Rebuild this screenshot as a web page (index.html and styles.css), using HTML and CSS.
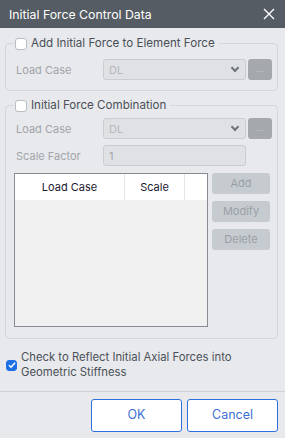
FILE: index.html
```html
<!doctype html>
<html lang="en">
  <head>
    <meta charset="UTF-8" />
    <title>Initial Force Control Data</title>
    <link rel="stylesheet" href="styles.css">
  </head>
  <body>
    <div class="dialog">
      <header class="title-bar">
        <span class="title">Initial Force Control Data</span>
        <svg class="close" width="12" height="12" viewBox="0 0 12 12">
          <path d="M1 1L11 11M11 1L1 11" stroke="#fff" stroke-width="1.4" />
        </svg>
      </header>
      <main class="content">
        <fieldset class="group">
          <legend><span class="check"></span>Add Initial Force to Element Force</legend>
          <div class="row">
            <span class="label">Load Case</span>
            <div class="select">DL<span class="arrow"></span></div>
            <div class="dots">...</div>
          </div>
        </fieldset>

        <fieldset class="group combo">
          <legend><span class="check"></span>Initial Force Combination</legend>
          <div class="row">
            <span class="label">Load Case</span>
            <div class="select">DL<span class="arrow"></span></div>
            <div class="dots">...</div>
          </div>
          <div class="row">
            <span class="label">Scale Factor</span>
            <div class="input">1</div>
          </div>
          <div class="table-area">
            <div class="table">
              <div class="thead">
                <span class="th th-case">Load Case</span>
                <span class="th th-scale">Scale</span>
                <span class="th th-rest"></span>
              </div>
            </div>
            <div class="side-buttons">
              <div class="btn-gray">Add</div>
              <div class="btn-gray">Modify</div>
              <div class="btn-gray">Delete</div>
            </div>
          </div>
        </fieldset>

        <label class="reflect">
          <span class="check on">
            <svg width="8" height="8" viewBox="0 0 8 8"><path d="M1 4.2L3.1 6.2L7 1.8" fill="none" stroke="#fff" stroke-width="1.5" /></svg>
          </span>
          <span>Check to Reflect Initial Axial Forces into Geometric Stiffness</span>
        </label>
      </main>
      <footer class="actions">
        <div class="btn">OK</div>
        <div class="btn">Cancel</div>
      </footer>
    </div>
  </body>
</html>
```

FILE: styles.css
```css
* {
  margin: 0;
  padding: 0;
  box-sizing: border-box;
}
body {
  width: 285px;
  height: 438px;
  background-color: #e8e9ec;
  font-family: Inter, "Noto Sans", sans-serif;
  font-size: 11px;
  color: #4a5058;
  overflow: hidden;
}
.dialog {
  display: flex;
  flex-direction: column;
  height: 438px;
}
.title-bar {
  height: 28px;
  flex: none;
  background-color: #555c63;
  color: #fff;
  display: flex;
  align-items: center;
  justify-content: space-between;
  padding: 0 10px 0 9px;
  font-size: 12.3px;
}
.content {
  flex: 1;
  padding: 8px 8px 0 5px;
}
.group {
  border: 1px solid #d4d6da;
  border-radius: 4px;
  padding: 8px 5px 10px 10px;
  width: 273px;
}
.group legend {
  display: flex;
  align-items: center;
  gap: 4px;
  font-size: 11.6px;
  line-height: 15px;
  color: #4a5058;
  margin-left: -2px;
  padding: 0 4px 0 1px;
}
.check {
  display: inline-block;
  width: 12px;
  height: 12px;
  border: 1px solid #b9bcc1;
  border-radius: 3px;
  background-color: #fff;
}
.check.on {
  background-color: #1e6fe6;
  border-color: #1e6fe6;
  display: flex;
  align-items: center;
  justify-content: center;
}
.row {
  display: flex;
  align-items: center;
  height: 21px;
}
.row + .row {
  margin-top: 6px;
}
.label {
  width: 87px;
  color: #a1a4a9;
}
.select,
.input {
  width: 143px;
  height: 21px;
  border: 1px solid #c9ccd0;
  border-radius: 3px;
  background-color: #dfe1e4;
  color: #b6b9bd;
  padding-left: 5px;
  display: flex;
  align-items: center;
  justify-content: space-between;
}
.input {
  color: #a1a4a9;
}
.arrow {
  width: 6px;
  height: 6px;
  border-right: 2px solid #6e747b;
  border-bottom: 2px solid #6e747b;
  transform: rotate(45deg);
  margin: 0 7px 3px 0;
}
.dots {
  width: 24px;
  height: 21px;
  margin-left: 2px;
  border-radius: 3px;
  background-color: #a5a9ae;
  color: #c3c6ca;
  font-size: 9px;
  text-align: center;
  line-height: 19px;
}
.combo {
  margin-top: 7px;
  padding-top: 5px;
  padding-bottom: 11px;
}
.table-area {
  display: flex;
  gap: 4px;
  margin-top: 7px;
  margin-left: -2px;
}
.table {
  width: 194px;
  height: 154px;
  border: 1px solid #878c93;
  background-color: #f0f0f0;
}
.thead {
  display: flex;
  height: 26px;
  background-color: #fff;
  color: #1b1830;
}
.th {
  display: flex;
  align-items: center;
  justify-content: center;
  border-right: 1px solid #e3e4e6;
}
.th-case {
  width: 110px;
}
.th-scale {
  width: 60px;
}
.th-rest {
  flex: 1;
  border-right: none;
}
.side-buttons {
  display: flex;
  flex-direction: column;
  gap: 7px;
}
.btn-gray {
  width: 58px;
  height: 21px;
  border-radius: 3px;
  background-color: #c6cbcf;
  color: #9aa0a6;
  text-align: center;
  line-height: 21px;
}
.reflect {
  display: flex;
  align-items: center;
  gap: 4px;
  margin: 11px 0 0 1px;
  line-height: 15px;
  font-size: 11.3px;
}
.reflect .check {
  flex: none;
  width: 11px;
  height: 11px;
}
.actions {
  border-top: 1px solid #cfd1d5;
  height: 47px;
  flex: none;
  display: flex;
  justify-content: flex-end;
  gap: 5px;
  padding: 7px 7px 0 0;
}
.btn {
  width: 91px;
  height: 33px;
  border: 1.5px solid #2f6fe2;
  border-radius: 3px;
  background-color: #fff;
  color: #3b6fd4;
  font-size: 12.5px;
  text-align: center;
  line-height: 30px;
}
```
